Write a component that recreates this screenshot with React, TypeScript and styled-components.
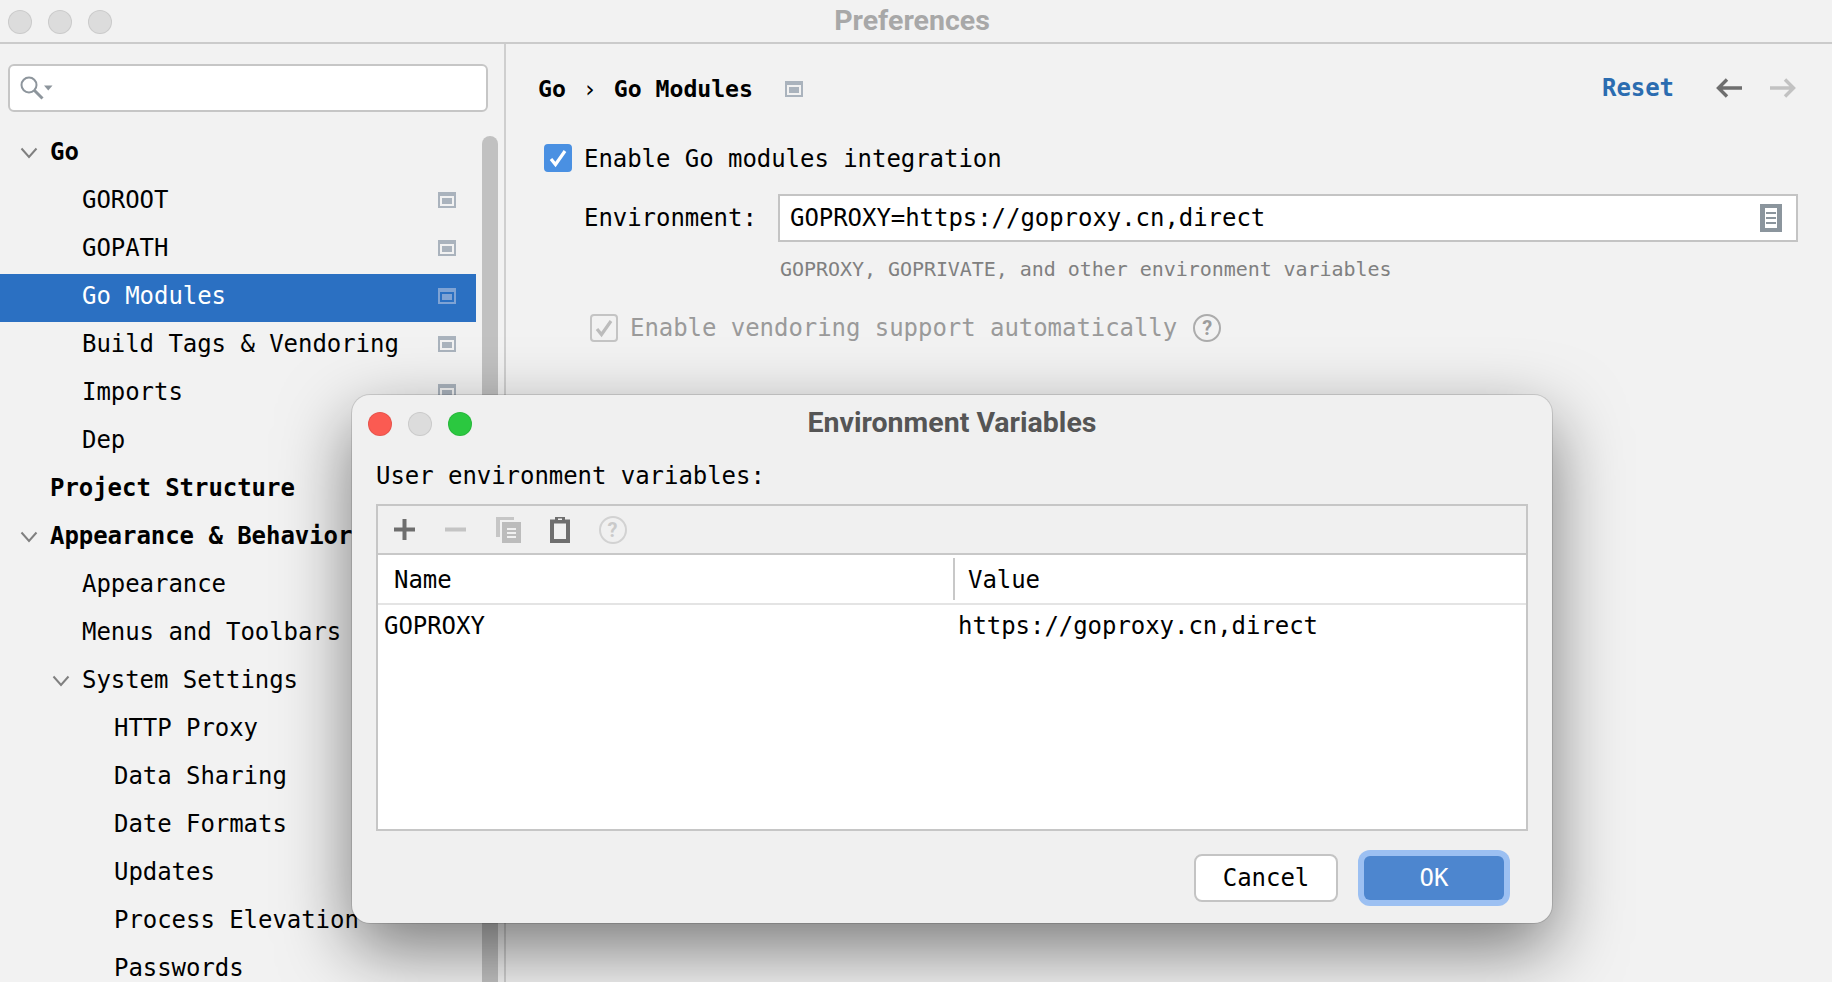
import React from "react";
import styled, { createGlobalStyle } from "styled-components";

const mono = `"DejaVu Sans Mono", "Liberation Mono", monospace`;

const GlobalStyle = createGlobalStyle`
  html, body {
    margin: 0;
    padding: 0;
    background: #f2f2f2;
    overflow: hidden;
  }
  * {
    box-sizing: border-box;
  }
`;

type TreeItem = {
  label: string;
  depth: number;
  bold?: boolean;
  open?: boolean;
  project?: boolean;
  selected?: boolean;
};

const treeItems: TreeItem[] = [
  { label: "Go", depth: 0, bold: true, open: true },
  { label: "GOROOT", depth: 1, project: true },
  { label: "GOPATH", depth: 1, project: true },
  { label: "Go Modules", depth: 1, project: true, selected: true },
  { label: "Build Tags & Vendoring", depth: 1, project: true },
  { label: "Imports", depth: 1, project: true },
  { label: "Dep", depth: 1 },
  { label: "Project Structure", depth: 0, bold: true },
  { label: "Appearance & Behavior", depth: 0, bold: true, open: true },
  { label: "Appearance", depth: 1 },
  { label: "Menus and Toolbars", depth: 1 },
  { label: "System Settings", depth: 1, open: true },
  { label: "HTTP Proxy", depth: 2 },
  { label: "Data Sharing", depth: 2 },
  { label: "Date Formats", depth: 2 },
  { label: "Updates", depth: 2 },
  { label: "Process Elevation", depth: 2 },
  { label: "Passwords", depth: 2 },
];

const Chevron = () => (
  <svg width="18" height="12" viewBox="0 0 18 12" fill="none">
    <path d="M1.5 1.5 9 10l7.5-8.5" stroke="#808080" strokeWidth="2" />
  </svg>
);

const ProjectIcon = ({ selected }: { selected?: boolean }) => {
  const c = selected ? "#7fa3d4" : "#aab3bd";
  return (
    <svg width="18" height="16" viewBox="0 0 18 16">
      <path d="M0 0h18v16H0zM2 4v10h14V4z" fill={c} fillRule="evenodd" />
      <rect x="4" y="6" width="10" height="6" fill={c} />
    </svg>
  );
};

const SearchIcon = () => (
  <svg width="34" height="26" viewBox="0 0 34 26" fill="none">
    <circle cx="9" cy="10" r="7.5" stroke="#8d959c" strokeWidth="2" />
    <path d="m14.500 15.500 8 8" stroke="#8d959c" strokeWidth="3" />
    <path d="M24 10.500h8.500l-4.250 5z" fill="#8d959c" />
  </svg>
);

const ArrowIcon = ({ color, flip }: { color: string; flip?: boolean }) => (
  <svg
    width="26"
    height="20"
    viewBox="0 0 26 20"
    fill="none"
    style={flip ? { transform: "scaleX(-1)" } : undefined}
  >
    <path d="M26 10H3M11 1.5 2.5 10l8.5 8.5" stroke={color} strokeWidth="3.4" />
  </svg>
);

const DocIcon = () => (
  <svg width="22" height="28" viewBox="0 0 22 28">
    <path d="M0 0h22v28H0zM5 4v20h12V4z" fill="#8b959d" fillRule="evenodd" />
    <path d="M6 8h10v2H6zM6 13h10v2H6zM6 18h10v2H6z" fill="#8b959d" />
  </svg>
);

const CheckMark = ({ color }: { color: string }) => (
  <svg width="18" height="20" viewBox="0 0 18 20" fill="none">
    <path d="M2 11l4.500 5.500L16 3" stroke={color} strokeWidth="3.2" />
  </svg>
);

const PlusIcon = () => (
  <svg width="21" height="21" viewBox="0 0 21 21">
    <path d="M8.500 0h4v8.500H21v4h-8.500V21h-4v-8.500H0v-4h8.500z" fill="#6e6e6e" />
  </svg>
);

const MinusIcon = () => (
  <svg width="21" height="21" viewBox="0 0 21 21">
    <path d="M0 8.500h21v4H0z" fill="#c4c4c4" />
  </svg>
);

const CopyIcon = () => (
  <svg width="25" height="26" viewBox="0 0 25 26">
    <path d="M0 0h18v3H4v17H0z" fill="#c6c6c6" />
    <path
      d="M6 5h19v21H6zM11 11h9v2h-9zM11 15h9v2h-9zM11 19h9v2h-9z"
      fill="#bcbcbc"
      fillRule="evenodd"
    />
  </svg>
);

const ClipboardIcon = () => (
  <svg width="20" height="26" viewBox="0 0 20 26">
    <path
      d="M0 2.500h5V0h10v2.500h5V26H0zM4 6.500V22h12V6.500zM8 1.500v1.500h4V1.500z"
      fill="#6e6e6e"
      fillRule="evenodd"
    />
  </svg>
);

export default function App() {
  return (
    <Page>
      <GlobalStyle />
      <TitleBar>
        <Lights>
          <Light color="#dcdcdc" />
          <Light color="#dcdcdc" />
          <Light color="#dcdcdc" />
        </Lights>
        <WindowTitle color="#a8a8a8">Preferences</WindowTitle>
      </TitleBar>
      <Body>
        <Sidebar>
          <SearchBox>
            <SearchIcon />
          </SearchBox>
          <TreeArea>
            <Tree>
              {treeItems.map((item) => (
                <TreeRow
                  key={item.label}
                  $depth={item.depth}
                  $selected={item.selected}
                  $bold={item.bold}
                >
                  {item.open && (
                    <ChevronSlot $depth={item.depth}>
                      <Chevron />
                    </ChevronSlot>
                  )}
                  <RowLabel>{item.label}</RowLabel>
                  {item.project && <ProjectIcon selected={item.selected} />}
                </TreeRow>
              ))}
            </Tree>
            <ScrollThumb />
          </TreeArea>
        </Sidebar>
        <Main>
          <Header>
            <Crumbs>
              <span>Go</span>
              <CrumbSep>›</CrumbSep>
              <span>Go Modules</span>
              <ProjectIcon />
            </Crumbs>
            <HeaderActions>
              <ResetLink>Reset</ResetLink>
              <ArrowIcon color="#6e6e6e" />
              <ArrowIcon color="#c2c2c2" flip />
            </HeaderActions>
          </Header>
          <CheckRow>
            <CheckBox $checked>
              <CheckMark color="#ffffff" />
            </CheckBox>
            <CheckLabel>Enable Go modules integration</CheckLabel>
          </CheckRow>
          <EnvRow>
            <EnvLabel>Environment:</EnvLabel>
            <EnvField>
              <span>GOPROXY=https://goproxy.cn,direct</span>
              <DocIcon />
            </EnvField>
          </EnvRow>
          <Hint>GOPROXY, GOPRIVATE, and other environment variables</Hint>
          <VendorRow>
            <CheckBox>
              <CheckMark color="#bcbcbc" />
            </CheckBox>
            <span>Enable vendoring support automatically</span>
            <HelpBadge>?</HelpBadge>
          </VendorRow>
        </Main>
      </Body>

      <Dialog>
        <DialogTitleBar>
          <Lights>
            <Light color="#fb5b52" />
            <Light color="#dcdcdc" />
            <Light color="#2bc840" />
          </Lights>
          <WindowTitle color="#555555">Environment Variables</WindowTitle>
        </DialogTitleBar>
        <DialogBody>
          <TableCaption>User environment variables:</TableCaption>
          <TableBox>
            <TableToolbar>
              <PlusIcon />
              <MinusIcon />
              <CopyIcon />
              <ClipboardIcon />
              <HelpBadge $faint>?</HelpBadge>
            </TableToolbar>
            <TableHead>
              <HeadCell>Name</HeadCell>
              <HeadCell $divider>Value</HeadCell>
            </TableHead>
            <TableRow>
              <NameCell>GOPROXY</NameCell>
              <ValueCell>https://goproxy.cn,direct</ValueCell>
            </TableRow>
          </TableBox>
          <Footer>
            <CancelButton>Cancel</CancelButton>
            <OkButton>OK</OkButton>
          </Footer>
        </DialogBody>
      </Dialog>
    </Page>
  );
}

const Page = styled.div`
  position: relative;
  display: flex;
  flex-direction: column;
  width: 1832px;
  height: 982px;
  overflow: hidden;
  background: #f2f2f2;
  color: #000000;
  font-family: ${mono};
  font-size: 24px;
  letter-spacing: -0.05px;
`;

const TitleBar = styled.div`
  position: relative;
  flex: none;
  display: flex;
  align-items: center;
  justify-content: center;
  height: 44px;
  padding: 0 8px 2px 0;
  border-bottom: 2px solid #cbcbcb;
`;

const Lights = styled.div`
  position: absolute;
  left: 8px;
  top: 10px;
  display: flex;
  gap: 16px;
`;

const Light = styled.span<{ color: string }>`
  width: 24px;
  height: 24px;
  border-radius: 50%;
  background: ${(props) => props.color};
  border: 1px solid rgba(0, 0, 0, 0.08);
`;

const WindowTitle = styled.div<{ color: string }>`
  font-family: Roboto, "Liberation Sans", sans-serif;
  font-weight: 700;
  font-size: 28.5px;
  letter-spacing: 0;
  color: ${(props) => props.color};
`;

const Body = styled.div`
  flex: 1;
  display: flex;
  min-height: 0;
`;

const Sidebar = styled.div`
  flex: none;
  width: 506px;
  padding-top: 20px;
  border-right: 2px solid #cfcfcf;
  display: flex;
  flex-direction: column;
`;

const SearchBox = styled.div`
  flex: none;
  display: flex;
  align-items: center;
  width: 480px;
  height: 48px;
  margin-left: 8px;
  padding-left: 10px;
  background: #ffffff;
  border: 2px solid #c6c6c6;
  border-radius: 6px;
`;

const TreeArea = styled.div`
  flex: 1;
  display: flex;
  margin-top: 16px;
  min-height: 0;
`;

const Tree = styled.div`
  flex: none;
  width: 476px;
  isolation: isolate;
`;

const TreeRow = styled.div<{
  $depth: number;
  $selected?: boolean;
  $bold?: boolean;
}>`
  position: relative;
  display: flex;
  align-items: center;
  height: 48px;
  padding-left: ${(props) => 50 + props.$depth * 32}px;
  padding-right: 20px;
  white-space: nowrap;
  font-weight: ${(props) => (props.$bold ? 700 : 400)};
  color: ${(props) => (props.$selected ? "#ffffff" : "#000000")};

  ${(props) =>
    props.$selected &&
    `
    &::before {
      content: "";
      position: absolute;
      inset: 2px 0 -2px 0;
      background: #2b70c2;
      z-index: -1;
    }
  `}
`;

const ChevronSlot = styled.span<{ $depth: number }>`
  position: absolute;
  left: ${(props) => 20 + props.$depth * 32}px;
  top: 19px;
  display: flex;
`;

const RowLabel = styled.span`
  flex: 1;
`;

const ScrollThumb = styled.div`
  flex: none;
  width: 16px;
  margin: 8px 0 0 6px;
  background: #c1c1c1;
  border-radius: 8px 8px 0 0;
`;

const Main = styled.div`
  flex: 1;
  min-width: 0;
  padding: 20px 34px 0 32px;
`;

const Header = styled.div`
  display: flex;
  align-items: center;
  justify-content: space-between;
  height: 48px;
`;

const Crumbs = styled.div`
  display: flex;
  align-items: center;
  font-weight: 700;
  font-size: 23.2px;

  > svg {
    margin-left: 32px;
    margin-top: 2px;
  }
`;

const CrumbSep = styled.span`
  width: 48px;
  text-align: center;
  font-weight: 400;
`;

const HeaderActions = styled.div`
  display: flex;
  align-items: center;
  margin-right: 2px;

  > svg {
    margin-left: 28px;
  }

  > svg:first-of-type {
    margin-left: 42px;
  }
`;

const ResetLink = styled.span`
  font-weight: 700;
  color: #2b6cb0;
`;

const CheckRow = styled.div`
  display: flex;
  align-items: center;
  gap: 12px;
  height: 28px;
  margin: 32px 0 0 6px;
`;

const CheckLabel = styled.span`
  padding-top: 1px;
`;

const CheckBox = styled.span<{ $checked?: boolean }>`
  flex: none;
  display: flex;
  align-items: center;
  justify-content: center;
  width: 28px;
  height: 28px;
  border-radius: 4px;
  background: ${(props) => (props.$checked ? "#4a90e2" : "#f2f2f2")};
  border: 2px solid ${(props) => (props.$checked ? "#4a90e2" : "#c4c4c4")};
`;

const EnvRow = styled.div`
  display: flex;
  align-items: center;
  height: 48px;
  margin: 22px 0 0 46px;
`;

const EnvLabel = styled.span`
  flex: none;
  width: 194px;
`;

const EnvField = styled.div`
  flex: 1;
  display: flex;
  align-items: center;
  justify-content: space-between;
  height: 48px;
  padding: 0 14px 0 10px;
  background: #ffffff;
  border: 2px solid #c4c4c4;
`;

const Hint = styled.div`
  margin: 15px 0 0 242px;
  font-size: 20px;
  line-height: 24px;
  color: #808080;
`;

const VendorRow = styled.div`
  display: flex;
  align-items: center;
  gap: 12px;
  height: 28px;
  margin: 33px 0 0 52px;
  color: #9a9a9a;

  > span:last-child {
    margin-left: 4px;
  }
`;

const HelpBadge = styled.span<{ $faint?: boolean }>`
  flex: none;
  display: flex;
  align-items: center;
  justify-content: center;
  width: 28px;
  height: 28px;
  border: 2px solid ${(props) => (props.$faint ? "#d2d2d2" : "#acacac")};
  border-radius: 50%;
  font-family: Roboto, sans-serif;
  font-weight: 700;
  font-size: 20px;
  color: ${(props) => (props.$faint ? "#cacaca" : "#9c9c9c")};
`;

const Dialog = styled.div`
  position: absolute;
  left: 352px;
  top: 395px;
  display: flex;
  flex-direction: column;
  width: 1200px;
  height: 528px;
  background: #f0f0f0;
  border-radius: 18px;
  box-shadow: 0 0 0 1px rgba(0, 0, 0, 0.12), 0 26px 70px rgba(0, 0, 0, 0.5);
`;

const DialogTitleBar = styled.div`
  position: relative;
  flex: none;
  display: flex;
  align-items: center;
  justify-content: center;
  height: 58px;
  padding-bottom: 4px;

  ${Lights} {
    left: 16px;
    top: 17px;
  }
`;

const DialogBody = styled.div`
  flex: 1;
  padding: 0 24px 0 24px;
`;

const TableCaption = styled.div`
  margin-top: 7px;
  line-height: 32px;
`;

const TableBox = styled.div`
  height: 327px;
  margin-top: 12px;
  background: #ffffff;
  border: 2px solid #c6c6c6;
`;

const TableToolbar = styled.div`
  display: flex;
  align-items: center;
  gap: 30px;
  height: 49px;
  padding-left: 16px;
  background: #f0f0f0;
  border-bottom: 2px solid #c8c8c8;

  > svg:nth-child(3) {
    margin-right: -1.5px;
  }
  > svg:nth-child(4) {
    margin-right: -1px;
  }
`;

const TableHead = styled.div`
  display: grid;
  grid-template-columns: 575px 1fr;
  height: 50px;
  padding: 3px 0;
  border-bottom: 2px solid #e4e4e4;
`;

const HeadCell = styled.div<{ $divider?: boolean }>`
  display: flex;
  align-items: center;
  padding: 2px 0 0 ${(props) => (props.$divider ? 13 : 16)}px;
  border-left: ${(props) => (props.$divider ? "2px solid #c8c8c8" : "none")};
`;

const TableRow = styled.div`
  display: grid;
  grid-template-columns: 575px 1fr;
  align-items: center;
  height: 42px;
`;

const NameCell = styled.div`
  padding-left: 6px;
`;

const ValueCell = styled.div`
  padding-left: 5px;
`;

const Footer = styled.div`
  display: flex;
  align-items: center;
  justify-content: flex-end;
  gap: 26px;
  margin-top: 23px;
  padding-right: 24px;
`;

const CancelButton = styled.div`
  display: flex;
  align-items: center;
  justify-content: center;
  width: 144px;
  height: 48px;
  background: #ffffff;
  border: 2px solid #c4c4c4;
  border-radius: 8px;
`;

const OkButton = styled.div`
  display: flex;
  align-items: center;
  justify-content: center;
  width: 140px;
  height: 44px;
  background: #4d86cf;
  color: #ffffff;
  border-radius: 6px;
  box-shadow: 0 0 0 6px #9cc0f2;
`;
